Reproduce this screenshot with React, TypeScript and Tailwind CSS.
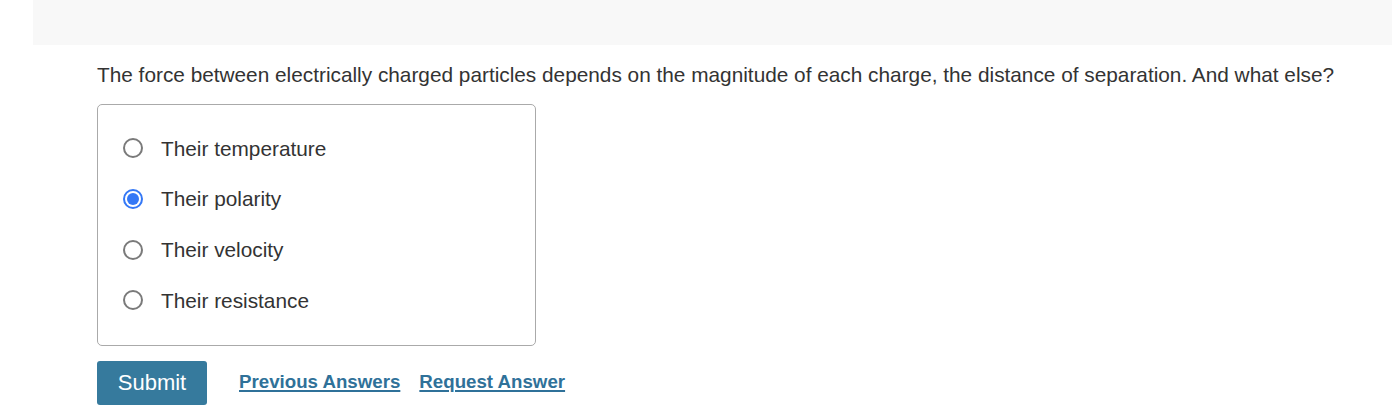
import React from "react";

const options = [
  { label: "Their temperature", checked: false },
  { label: "Their polarity", checked: true },
  { label: "Their velocity", checked: false },
  { label: "Their resistance", checked: false },
];

function Radio({ checked }: { checked: boolean }) {
  if (checked) {
    return (
      <span className="flex h-[20px] w-[20px] shrink-0 items-center justify-center rounded-full border-[2px] border-[#3478f6] bg-white">
        <span className="h-[12px] w-[12px] rounded-full bg-[#3478f6]" />
      </span>
    );
  }
  return <span className="h-[20px] w-[20px] shrink-0 rounded-full border-[2px] border-[#7a7a7a] bg-white" />;
}

export default function App() {
  return (
    <div className="min-h-[414px] bg-white text-[#333333]" style={{ fontFamily: "Helvetica, 'Liberation Sans', Arial, sans-serif" }}>
      <div className="ml-[33px] h-[45px] bg-[#f8f8f8]" />
      <div className="pl-[97px] pt-[19px]">
        <p className="whitespace-nowrap text-[20.8px] leading-[22px]">
          The force between electrically charged particles depends on the magnitude of each charge, the distance of separation. And what else?
        </p>
        <div className="mt-[18px] flex h-[242px] w-[439px] flex-col rounded-[5px] border border-[#aaaaaa] pl-[25px] pt-[18px]">
          {options.map((o) => (
            <label key={o.label} className="flex h-[50.7px] items-center gap-[18px]">
              <Radio checked={o.checked} />
              <span className="text-[20.8px]">{o.label}</span>
            </label>
          ))}
        </div>
        <div className="mt-[15px] flex items-center">
          <button className="flex h-[44px] w-[110px] items-center justify-center rounded-[3px] bg-[#367a9d] pb-[1px] text-[22px] text-white">
            Submit
          </button>
          <a className="mb-[2px] ml-[32px] text-[18.7px] font-bold text-[#2f7199] underline decoration-[1.5px] underline-offset-[2px]" href="#">
            Previous Answers
          </a>
          <a className="mb-[2px] ml-[19px] text-[18.7px] font-bold text-[#2f7199] underline decoration-[1.5px] underline-offset-[2px]" href="#">
            Request Answer
          </a>
        </div>
      </div>
    </div>
  );
}
